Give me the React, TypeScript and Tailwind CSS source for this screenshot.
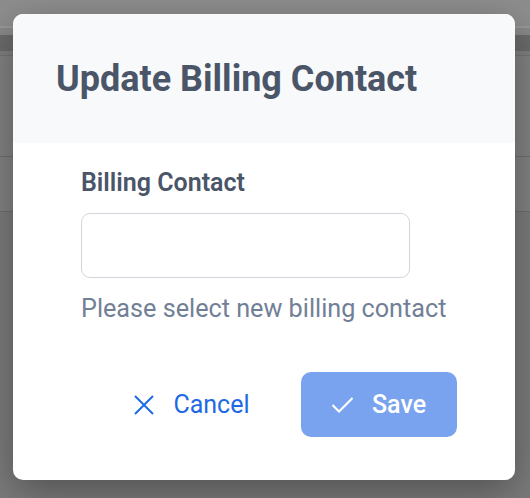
import React from "react";

export default function App() {
  return (
    <div
      className="relative w-[530px] h-[498px] overflow-hidden bg-[#7c7c7c]"
      style={{ fontFamily: "Roboto, 'Liberation Sans', sans-serif" }}
    >
      {/* dimmed page behind the dialog */}
      <div className="flex flex-col">
        <div className="h-[26px] bg-[#8e8e8e]" />
        <div className="h-[2px] bg-[#9a9a9a]" />
        <div className="h-[7px] bg-[#8a8a8a]" />
        <div className="h-[16px] bg-[#6c6c6c]" />
        <div className="h-[4px] bg-[#808080]" />
        <div className="h-[1px] bg-[#747474]" />
        <div className="h-[100px] bg-[#838383]" />
        <div className="h-[1px] bg-[#6e6e6e]" />
        <div className="h-[54px] bg-[#838383]" />
        <div className="h-[1px] bg-[#6e6e6e]" />
        <div className="h-[286px] bg-[#7c7c7c]" />
      </div>

      {/* dialog */}
      <div className="absolute left-[13px] top-[14px] w-[502px] h-[466px] bg-white rounded-[10px] overflow-hidden shadow-[0_12px_40px_rgba(0,0,0,0.35)] flex flex-col">
        <div className="h-[129px] bg-[#f8f9fb] flex items-center pl-[43px]">
          <h1 className="text-[36px] font-bold text-[#4a5568] leading-none">
            Update Billing Contact
          </h1>
        </div>

        <div className="flex flex-col items-start pl-[68px] pt-[22px]">
          <div className="text-[25px] leading-[36px] font-semibold text-[#4a5568]">
            Billing Contact
          </div>
          <input
            className="mt-[12px] w-[329px] h-[65px] rounded-[9px] border border-[#d2d6dc] bg-white outline-none"
            type="text"
          />
          <div className="mt-[13px] text-[25.2px] leading-[36px] text-[#718096]">
            Please select new billing contact
          </div>
        </div>

        <div className="flex justify-end gap-[31px] pr-[58px] mt-[45px]">
          <button className="w-[156px] h-[65px] rounded-[10px] flex items-center justify-center gap-[19px] text-[25px] text-[#1e6ae4]">
            <svg width="20" height="20" viewBox="0 0 20 20" fill="none" stroke="currentColor" strokeWidth="2" strokeLinecap="butt">
              <path d="M1 1 19 19M19 1 1 19" />
            </svg>
            <span>Cancel</span>
          </button>
          <button className="w-[156px] h-[65px] rounded-[10px] bg-[#79a3ef] flex items-center justify-center gap-[19px] text-[25px] font-medium text-white">
            <svg width="21" height="16" viewBox="0 0 21 16" fill="none" stroke="currentColor" strokeWidth="2" strokeLinecap="butt" strokeLinejoin="miter">
              <path d="M0.5 8 7 14.5 20.5 1" />
            </svg>
            <span>Save</span>
          </button>
        </div>
      </div>
    </div>
  );
}
